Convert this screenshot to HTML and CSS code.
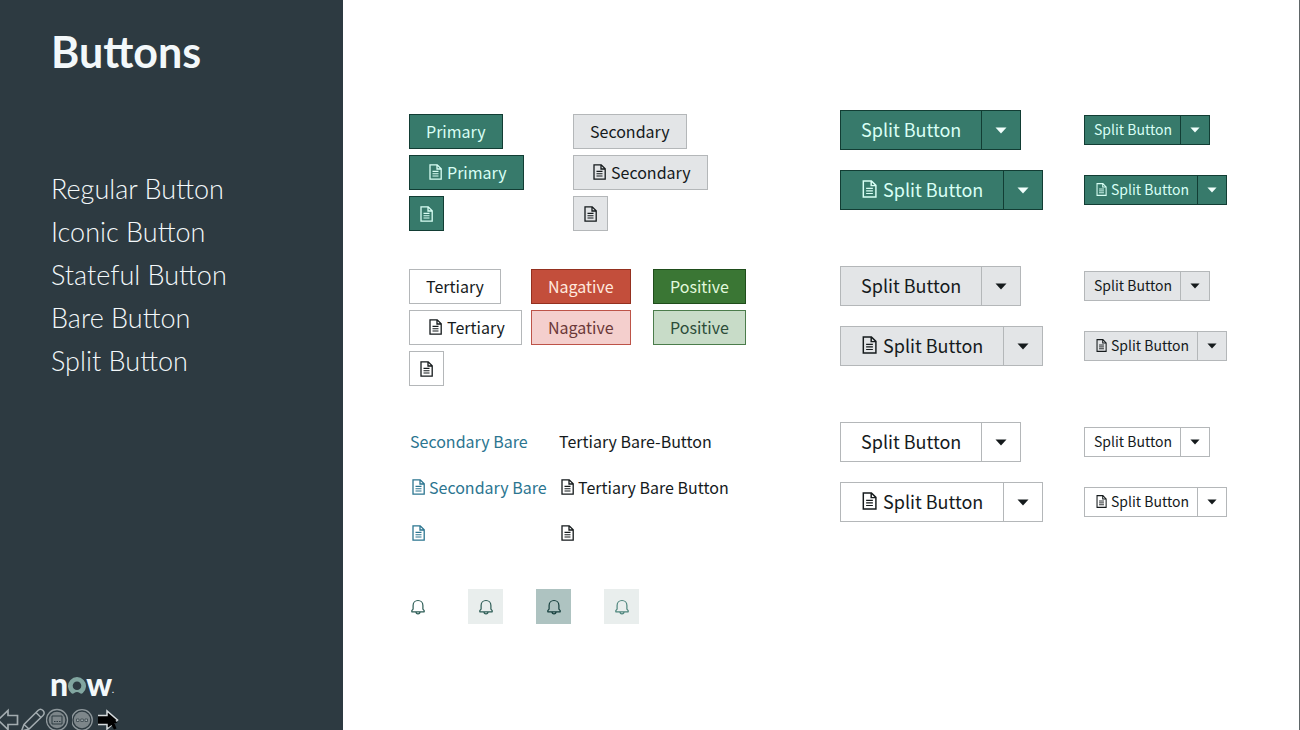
FILE: index.html
```html
<!DOCTYPE html>
<html lang="en">
<head>
<meta charset="utf-8">
<title>Buttons</title>
<link rel="stylesheet" href="styles.css">
</head>
<body>
<svg class="defs" aria-hidden="true">
  <symbol id="doc" viewBox="0 0 13 16">
    <path d="M1 .8h7.2L12.2 4.8V15.2H1z M8 1v4h4" fill="none" stroke="currentColor" stroke-width="1.3"/>
    <path d="M3.5 7.4h6M3.5 9.7h6M3.5 12h6" fill="none" stroke="currentColor" stroke-width="1.1"/>
  </symbol>
  <symbol id="caret" viewBox="0 0 12 7"><path d="M.5 .5h11L6 6.5z" fill="currentColor"/></symbol>
  <symbol id="bell" viewBox="0 0 14 16">
    <path d="M.8 12.8v-1.2l1.3-1.5V6.500C2.100 3.500 4.300 1.500 7 1.500s4.900 2 4.900 5v3.600l1.300 1.500v1.200z M5 13c0 2.400 4 2.400 4 0" fill="none" stroke="currentColor" stroke-width="1.200" stroke-linejoin="round"/>
  </symbol>
</svg>
<div class="slide">
  <aside class="sidebar">
    <h1 class="title">Buttons</h1>
    <ul class="topics">
      <li>Regular Button</li>
      <li>Iconic Button</li>
      <li>Stateful Button</li>
      <li>Bare Button</li>
      <li>Split Button</li>
    </ul>
    <div class="logo">
      <span>n</span><svg class="ring" viewBox="0 0 18 18" role="img" aria-label="o"><path d="M3.200 17A9 9 0 1 1 14.800 17Q13.200 18.400 11.800 17Q9 15 6.200 17Q4.800 18.400 3.200 17z" fill="#81a6a0"/><circle cx="9" cy="9.800" r="4.300" fill="#2d3a41"/></svg><span>w</span><small>.</small>
    </div>
    <nav class="controls" aria-label="Slide controls">
      <button aria-label="Previous"><svg viewBox="0 0 20 24"><path d="M-2 12L8 2.500V7.500H17.500V16.500H8V21.500z" fill="#2d3a41" stroke="#a3acb0" stroke-width="1.700"/></svg></button>
      <button class="wide" aria-label="Pen"><svg viewBox="0 0 26 24"><path d="M1.500 23L4 16.500L18 2.500Q20.500 0 23 2.500Q25.300 5 23 7.500L9 21z M4 16.500L9 21M16 4.500L21 9.500" fill="#2d3a41" stroke="#a3acb0" stroke-width="1.500"/></svg></button>
      <button class="wide" aria-label="Slides"><svg viewBox="0 0 26 24"><circle cx="11" cy="12" r="10.500" fill="#2d3a41" stroke="#8f989c" stroke-width="1.300"/><circle cx="11" cy="12" r="8.300" fill="#7d868a"/><path d="M6 8h10v8H6zM8 13.500h1.500m1 0h1.500m1 0h1.500" fill="none" stroke="#2d3a41"/></svg></button>
      <button class="wide" aria-label="More"><svg viewBox="0 0 26 24"><circle cx="10" cy="12" r="10.300" fill="#2d3a41" stroke="#8f989c" stroke-width="1.300"/><circle cx="10" cy="12" r="8.300" fill="#7d868a"/><path d="M4.500 11h2.500v2.500H4.500zM8.800 11h2.500v2.500H8.800zM13 11h2.500v2.500H13z" fill="#a3acb0" stroke="#3a464c" stroke-width=".8"/></svg></button>
      <button class="wide" aria-label="Next"><svg viewBox="0 0 26 24"><path d="M-1 7.500H9V3L19.500 12L9 21V16.500H-1z" fill="#000" stroke="#d5dadc" stroke-width="1.500"/><path d="M10 7L19.500 14.500L16.500 15.500L18.500 20.500L16 21.500L13.500 17L10 19.500z" fill="#000"/></svg></button>
    </nav>
  </aside>

  <main class="board">
    <div class="regular">
      <section class="pair">
        <div class="stack">
          <button class="btn primary">Primary</button>
          <button class="btn primary"><svg class="doc"><use href="#doc"/></svg>Primary</button>
          <button class="btn primary square" aria-label="Primary document"><svg class="doc"><use href="#doc"/></svg></button>
        </div>
        <div class="stack">
          <button class="btn secondary">Secondary</button>
          <button class="btn secondary"><svg class="doc"><use href="#doc"/></svg>Secondary</button>
          <button class="btn secondary square" aria-label="Secondary document"><svg class="doc"><use href="#doc"/></svg></button>
        </div>
      </section>
      <section class="triple">
        <div class="stack">
          <button class="btn tertiary">Tertiary</button>
          <button class="btn tertiary"><svg class="doc"><use href="#doc"/></svg>Tertiary</button>
          <button class="btn tertiary square" aria-label="Tertiary document"><svg class="doc"><use href="#doc"/></svg></button>
        </div>
        <div class="stack">
          <button class="btn negative">Nagative</button>
          <button class="btn negative-soft">Nagative</button>
        </div>
        <div class="stack">
          <button class="btn positive">Positive</button>
          <button class="btn positive-soft">Positive</button>
        </div>
      </section>
      <section class="bares">
        <button class="bare blue">Secondary Bare</button>
        <button class="bare">Tertiary Bare-Button</button>
        <button class="bare blue"><svg class="doc"><use href="#doc"/></svg>Secondary Bare</button>
        <button class="bare"><svg class="doc"><use href="#doc"/></svg>Tertiary Bare Button</button>
        <button class="bare blue" aria-label="Secondary document"><svg class="doc"><use href="#doc"/></svg></button>
        <button class="bare" aria-label="Tertiary document"><svg class="doc"><use href="#doc"/></svg></button>
      </section>
      <section class="bells">
        <button class="bell" aria-label="Notifications"><svg><use href="#bell"/></svg></button>
        <button class="bell hover" aria-label="Notifications, hover"><svg><use href="#bell"/></svg></button>
        <button class="bell pressed" aria-label="Notifications, pressed"><svg><use href="#bell"/></svg></button>
        <button class="bell muted" aria-label="Notifications, muted"><svg><use href="#bell"/></svg></button>
      </section>
    </div>

    <div class="splits">
      <section class="split-group">
        <div class="split primary"><button>Split Button</button><button class="drop" aria-label="More"><svg><use href="#caret"/></svg></button></div>
        <div class="split small primary"><button>Split Button</button><button class="drop" aria-label="More"><svg><use href="#caret"/></svg></button></div>
        <div class="split primary"><button class="iconic"><svg class="doc"><use href="#doc"/></svg>Split Button</button><button class="drop" aria-label="More"><svg><use href="#caret"/></svg></button></div>
        <div class="split small primary"><button class="iconic"><svg class="doc"><use href="#doc"/></svg>Split Button</button><button class="drop" aria-label="More"><svg><use href="#caret"/></svg></button></div>
      </section>
      <section class="split-group">
        <div class="split secondary"><button>Split Button</button><button class="drop" aria-label="More"><svg><use href="#caret"/></svg></button></div>
        <div class="split small secondary"><button>Split Button</button><button class="drop" aria-label="More"><svg><use href="#caret"/></svg></button></div>
        <div class="split secondary"><button class="iconic"><svg class="doc"><use href="#doc"/></svg>Split Button</button><button class="drop" aria-label="More"><svg><use href="#caret"/></svg></button></div>
        <div class="split small secondary"><button class="iconic"><svg class="doc"><use href="#doc"/></svg>Split Button</button><button class="drop" aria-label="More"><svg><use href="#caret"/></svg></button></div>
      </section>
      <section class="split-group">
        <div class="split tertiary"><button>Split Button</button><button class="drop" aria-label="More"><svg><use href="#caret"/></svg></button></div>
        <div class="split small tertiary"><button>Split Button</button><button class="drop" aria-label="More"><svg><use href="#caret"/></svg></button></div>
        <div class="split tertiary"><button class="iconic"><svg class="doc"><use href="#doc"/></svg>Split Button</button><button class="drop" aria-label="More"><svg><use href="#caret"/></svg></button></div>
        <div class="split small tertiary"><button class="iconic"><svg class="doc"><use href="#doc"/></svg>Split Button</button><button class="drop" aria-label="More"><svg><use href="#caret"/></svg></button></div>
      </section>
    </div>
  </main>
</div>
</body>
</html>
```

FILE: styles.css
```css
* { box-sizing: border-box; }
body {
  margin: 0;
  background: #fff;
  color: #151a1c;
  font-family: "Source Sans Pro", "Noto Sans CJK SC", sans-serif;
}
button {
  margin: 0;
  padding: 0;
  border: 0;
  background: none;
  color: inherit;
  font: inherit;
  white-space: nowrap;
}
svg { display: block; flex: none; }
.defs { display: none; }
.slide { display: flex; min-height: 100vh; border-right: 1px solid #606668; }

.sidebar {
  flex: 0 0 343px;
  display: flex;
  flex-direction: column;
  background: #2d3a41;
  color: #f3f8fa;
  font-family: "Century Gothic", "URW Gothic", Lato, sans-serif;
}
.title {
  margin: 24px 0 0 51px;
  font-size: 43px;
  line-height: 56px;
  font-weight: 700;
}
.topics {
  margin: 87px 0 0;
  padding: 0 0 0 51px;
  list-style: none;
  font-size: 27px;
  font-weight: 300;
  line-height: 43px;
}
.logo {
  display: flex;
  align-items: flex-end;
  margin: auto 0 14px 50px;
  height: 18px;
  font: 900 32px/18px Lato, sans-serif;
}
.logo span { height: 28px; line-height: 28px; margin-bottom: -4px; }
.logo small { font-size: 8px; line-height: 8px; }
.logo .ring { width: 18px; height: 18px; }
.controls { display: flex; height: 22px; }
.controls button { width: 20px; }
.controls .wide { width: 26px; }
.controls svg { width: 100%; height: 24px; }

.board {
  flex: 1;
  display: flex;
  padding: 110px 0 0 66px;
}
.regular { flex: 0 0 431px; padding-top: 4px; font-size: 16px; }
.pair, .triple, .bares { display: grid; }
.pair { grid-template-columns: 164px auto; justify-content: start; }
.triple { grid-template-columns: 122px 122px auto; justify-content: start; margin-top: 38px; }
.stack { display: flex; flex-direction: column; align-items: flex-start; gap: 6px; }
.btn {
  display: flex;
  align-items: center;
  gap: 5px;
  height: 35px;
  padding: 0 16px 2px;
  border: 1px solid;
}
.square { width: 35px; padding: 0; justify-content: center; }
.doc { width: 13px; height: 16px; }
.btn .doc:not(:only-child) { margin-left: 2px; }
.btn:not(.square) .doc { margin-left: 3px; }
.btn.square .doc { margin: 0; }

.primary { background: #377a6b; border-color: #123d34; color: #d9fff5; }
.secondary { background: #e3e5e7; border-color: #b4b7b9; }
.tertiary { background: #fff; border-color: #b4b7b9; }
.negative { background: #c34e3b; border-color: #94301f; color: #ffe9df; }
.negative-soft { background: #f4cfcd; border-color: #bd5348; color: #6b3838; }
.positive { background: #3a7634; border-color: #1f4d1b; color: #e2fadd; }
.positive-soft { background: #c8dcc8; border-color: #4b7c4b; color: #2c4c38; }

.bares {
  grid-template-columns: 149px auto;
  grid-auto-rows: 46px;
  justify-content: start;
  margin-top: 33px;
}
.bare { display: flex; align-items: center; gap: 4px; padding: 0 1px 2px; }
.bare .doc { margin-left: 2px; }
.blue { color: #2b7590; }

.bells { display: flex; gap: 33px; margin: 32px 0 0 -9px; }
.bell { display: grid; place-items: center; width: 35px; height: 35px; color: #2c5c55; }
.bell svg { width: 14px; height: 16px; }
.hover { background: #e9eeed; }
.pressed { background: #aec3c1; color: #143e3c; }
.muted { background: #e9eeed; color: #4d857c; }

.splits { flex: 1; display: flex; flex-direction: column; gap: 56px; }
.split-group {
  display: grid;
  grid-template-columns: 244px auto;
  justify-content: start;
  justify-items: start;
  align-items: center;
  row-gap: 20px;
}
.split {
  display: flex;
  height: 40px;
  border: 1px solid;
  font-size: 18px;
}
.split.primary { border-color: #123d34; }
.split.secondary, .split.tertiary { border-color: #b4b7b9; }
.split button { display: flex; align-items: center; gap: 6px; padding: 0 20px 2px; }
.split .drop { width: 39px; padding: 0; justify-content: center; border-left: 1px solid; border-color: inherit; }
.split .doc { width: 15px; height: 18px; margin-left: 1px; }
.split .drop svg { width: 12px; height: 7px; }
.split.primary .drop { color: #f1fffc; border-color: #123d34; }
.split.small { height: 30px; font-size: 14px; }
.split.small button { gap: 4px; padding: 0 8px 2px 9px; }
.split.small .drop { width: 29px; padding: 0; }
.split.small .doc { width: 11px; height: 13px; margin-left: 2px; }
.split.small .drop svg { width: 10px; height: 6px; }
```
